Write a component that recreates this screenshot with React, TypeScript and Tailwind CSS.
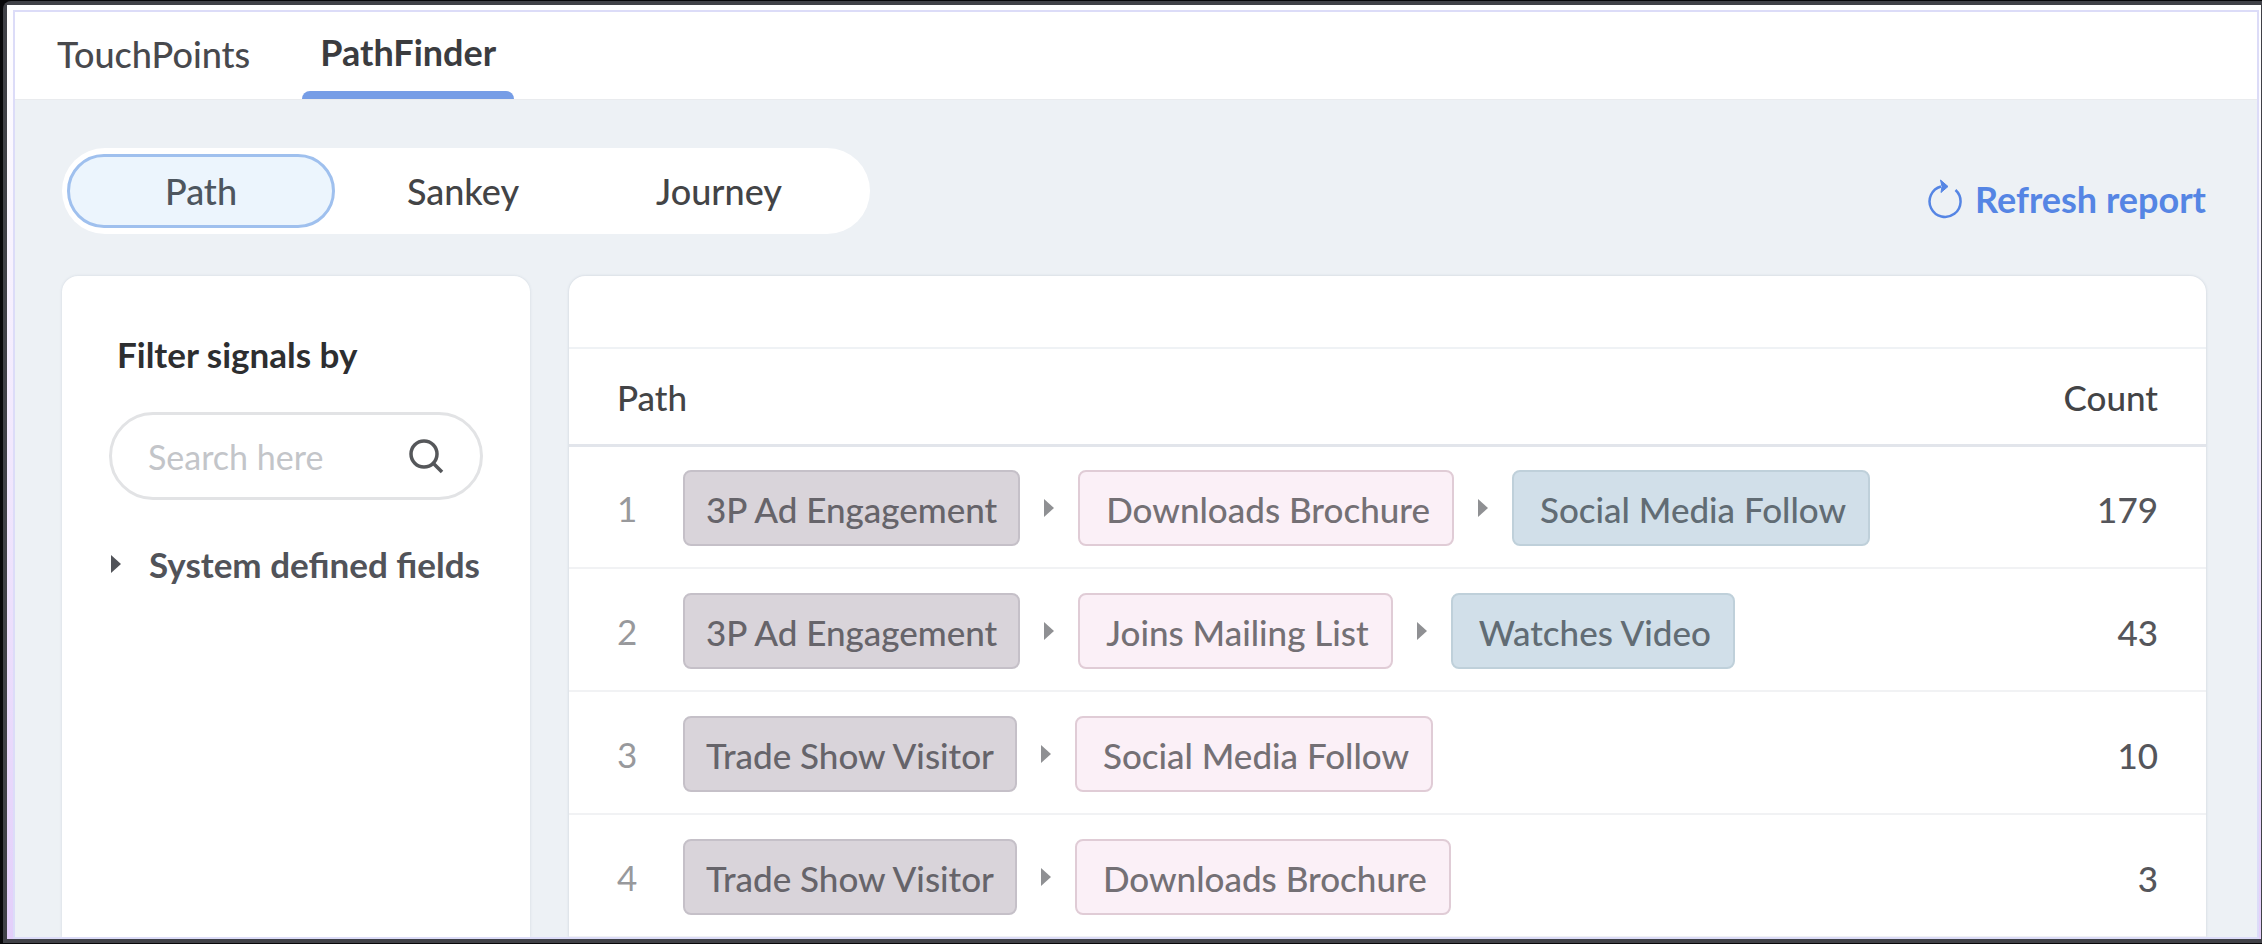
import { useState } from "react";

type Tone = "grey" | "pink" | "blue";

interface Step {
  label: string;
  tone: Tone;
}

interface PathRow {
  count: number;
  steps: Step[];
}

const TABS = ["TouchPoints", "PathFinder"];
const VIEWS = ["Path", "Sankey", "Journey"];

const ROWS: PathRow[] = [
  {
    count: 179,
    steps: [
      { label: "3P Ad Engagement", tone: "grey" },
      { label: "Downloads Brochure", tone: "pink" },
      { label: "Social Media Follow", tone: "blue" },
    ],
  },
  {
    count: 43,
    steps: [
      { label: "3P Ad Engagement", tone: "grey" },
      { label: "Joins Mailing List", tone: "pink" },
      { label: "Watches Video", tone: "blue" },
    ],
  },
  {
    count: 10,
    steps: [
      { label: "Trade Show Visitor", tone: "grey" },
      { label: "Social Media Follow", tone: "pink" },
    ],
  },
  {
    count: 3,
    steps: [
      { label: "Trade Show Visitor", tone: "grey" },
      { label: "Downloads Brochure", tone: "pink" },
    ],
  },
];

const TONES: Record<Tone, string> = {
  grey: "border-[#c5c0c8] bg-[#d9d4da] px-[21px] text-[#66646a]",
  pink: "border-[#e0ccd6] bg-[#fbf0f7] pr-[22px] pl-[26px] text-[#747075]",
  blue: "border-[#bfd0da] bg-[#d1dfe9] pr-[22px] pl-[26px] text-[#616c74]",
};

function Caret({ className }: { className: string }) {
  return (
    <svg viewBox="0 0 10 18" className={className} fill="currentColor" aria-hidden="true">
      <path d="M0 0 L10 9 L0 18 Z" />
    </svg>
  );
}

function RefreshIcon() {
  return (
    <svg viewBox="0 0 36 40" className="h-10 w-9" fill="none" stroke="currentColor" strokeWidth="2.5" aria-hidden="true">
      <path d="M28.5 11 A15.5 15.5 0 1 1 14 7.5" />
      <path d="M13.5 1 L21 7.5 L14 13.5 L15 7.5 Z" fill="currentColor" strokeWidth="1" />
    </svg>
  );
}

function SearchIcon() {
  return (
    <svg viewBox="0 0 36 36" className="h-9 w-9 shrink-0 text-[#55575a]" fill="none" stroke="currentColor" strokeWidth="3.5" aria-hidden="true">
      <circle cx="16" cy="16" r="13" />
      <path d="M25 25 L34 34" />
    </svg>
  );
}

function FilterPanel() {
  return (
    <aside className="w-[468px] shrink-0 rounded-t-2xl bg-white px-[47px] pt-[54px] shadow-[0_0_3px_rgba(60,80,110,0.15)]">
      <h2 className="pl-2 text-[35px] leading-12 font-bold text-[#2d2e30]">Filter signals by</h2>
      <label className="mt-[34px] flex h-[88px] items-center rounded-full border-3 border-[#e2e3e5] pr-9 pl-9">
        <input
          type="search"
          aria-label="Search signals"
          placeholder="Search here"
          className="min-w-0 flex-1 bg-transparent text-[34px] text-[#55575a] outline-none placeholder:text-[#c3c5c9]"
        />
        <SearchIcon />
      </label>
      <button type="button" className="mt-10 flex items-center gap-7 pl-0.5 text-[35px] leading-12 font-bold whitespace-nowrap text-[#515359]">
        <Caret className="h-[18px] w-[10px]" />
        System defined fields
      </button>
    </aside>
  );
}

function PathTable() {
  return (
    <section className="min-w-0 flex-1 rounded-t-2xl bg-white pt-[71px] shadow-[0_0_3px_rgba(60,80,110,0.2)]">
      <table className="w-full border-collapse text-[35px] leading-12">
        <thead>
          <tr className="h-[97px] border-t-2 border-b-3 border-t-[#eff2f5] border-b-[#e2e5eb] text-[#434446]">
            <th scope="col" className="pt-0.5 pl-12 text-left font-medium">Path</th>
            <th scope="col" className="pt-0.5 pr-12 text-right font-medium">Count</th>
          </tr>
        </thead>
        <tbody>
          {ROWS.map((row, index) => (
            <tr key={index} className="h-[123px] border-b-2 border-[#f1f2f4]">
              <td className="pt-0.5 pl-12">
                <div className="flex items-center">
                  <span className="w-[66px] text-[#98999c]">{index + 1}</span>
                  {row.steps.map((step, i) => (
                    <div key={step.label} className="flex items-center">
                      {i > 0 && <Caret className="mx-6 h-[18px] w-[10px] text-[#8f9093]" />}
                      <span className={`flex h-[76px] items-center rounded-lg border-2 pt-0.5 font-medium whitespace-nowrap ${TONES[step.tone]}`}>
                        {step.label}
                      </span>
                    </div>
                  ))}
                </div>
              </td>
              <td className="pt-1 pr-12 text-right font-medium text-[#55565b]">{row.count}</td>
            </tr>
          ))}
        </tbody>
      </table>
    </section>
  );
}

export default function App() {
  const [tab, setTab] = useState("PathFinder");
  const [view, setView] = useState("Path");

  return (
    <div className="h-screen overflow-hidden bg-[#08080a] py-px pl-[3px] font-['Lato',sans-serif]">
      <div className="h-full rounded-tl-lg bg-[#404147] pt-1 pr-px pb-1 pl-1">
        <div className="h-full bg-linear-to-b from-white to-[#e3cffa] pt-[5px] pr-[2px] pl-[6px]">
          <div className="flex h-full flex-col overflow-hidden border-2 border-[#dcdcf8] bg-[#edf1f5]">
            <nav className="flex h-[88px] shrink-0 gap-[34px] border-b border-[#e9ebee] bg-white pl-6">
              {TABS.map((name) => (
                <button
                  key={name}
                  type="button"
                  onClick={() => setTab(name)}
                  className={
                    name === tab
                      ? "flex flex-col items-center text-[36px] font-bold text-[#3b3c3f]"
                      : "flex flex-col items-center pb-1 text-[36px] font-medium text-[#48494d]"
                  }
                >
                  <span className="flex flex-1 items-center px-[18px]">{name}</span>
                  {name === tab && <span className="h-2 w-full rounded-t-lg bg-[#769de6]" />}
                </button>
              ))}
            </nav>

            <div className="flex shrink-0 items-center justify-between pt-12 pr-[51px] pl-[47px]">
              <div className="flex h-[86px] w-[808px] rounded-full bg-white px-[5px] py-1.5">
                {VIEWS.map((name) => (
                  <button
                    key={name}
                    type="button"
                    onClick={() => setView(name)}
                    className={
                      name === view
                        ? "w-[268px] rounded-full border-3 border-[#9fc0ee] bg-[#ecf5fd] text-[36px] leading-12 font-medium text-[#4d565f]"
                        : "w-64 rounded-full text-[36px] leading-12 font-medium text-[#434446]"
                    }
                  >
                    {name}
                  </button>
                ))}
              </div>
              <button type="button" className="flex items-center gap-3 pt-4 text-[36px] leading-12 font-bold text-[#5585e4]">
                <RefreshIcon />
                Refresh report
              </button>
            </div>

            <main className="flex min-h-0 flex-1 gap-[39px] pt-[42px] pr-[51px] pl-[47px]">
              <FilterPanel />
              <PathTable />
            </main>
          </div>
        </div>
      </div>
    </div>
  );
}
